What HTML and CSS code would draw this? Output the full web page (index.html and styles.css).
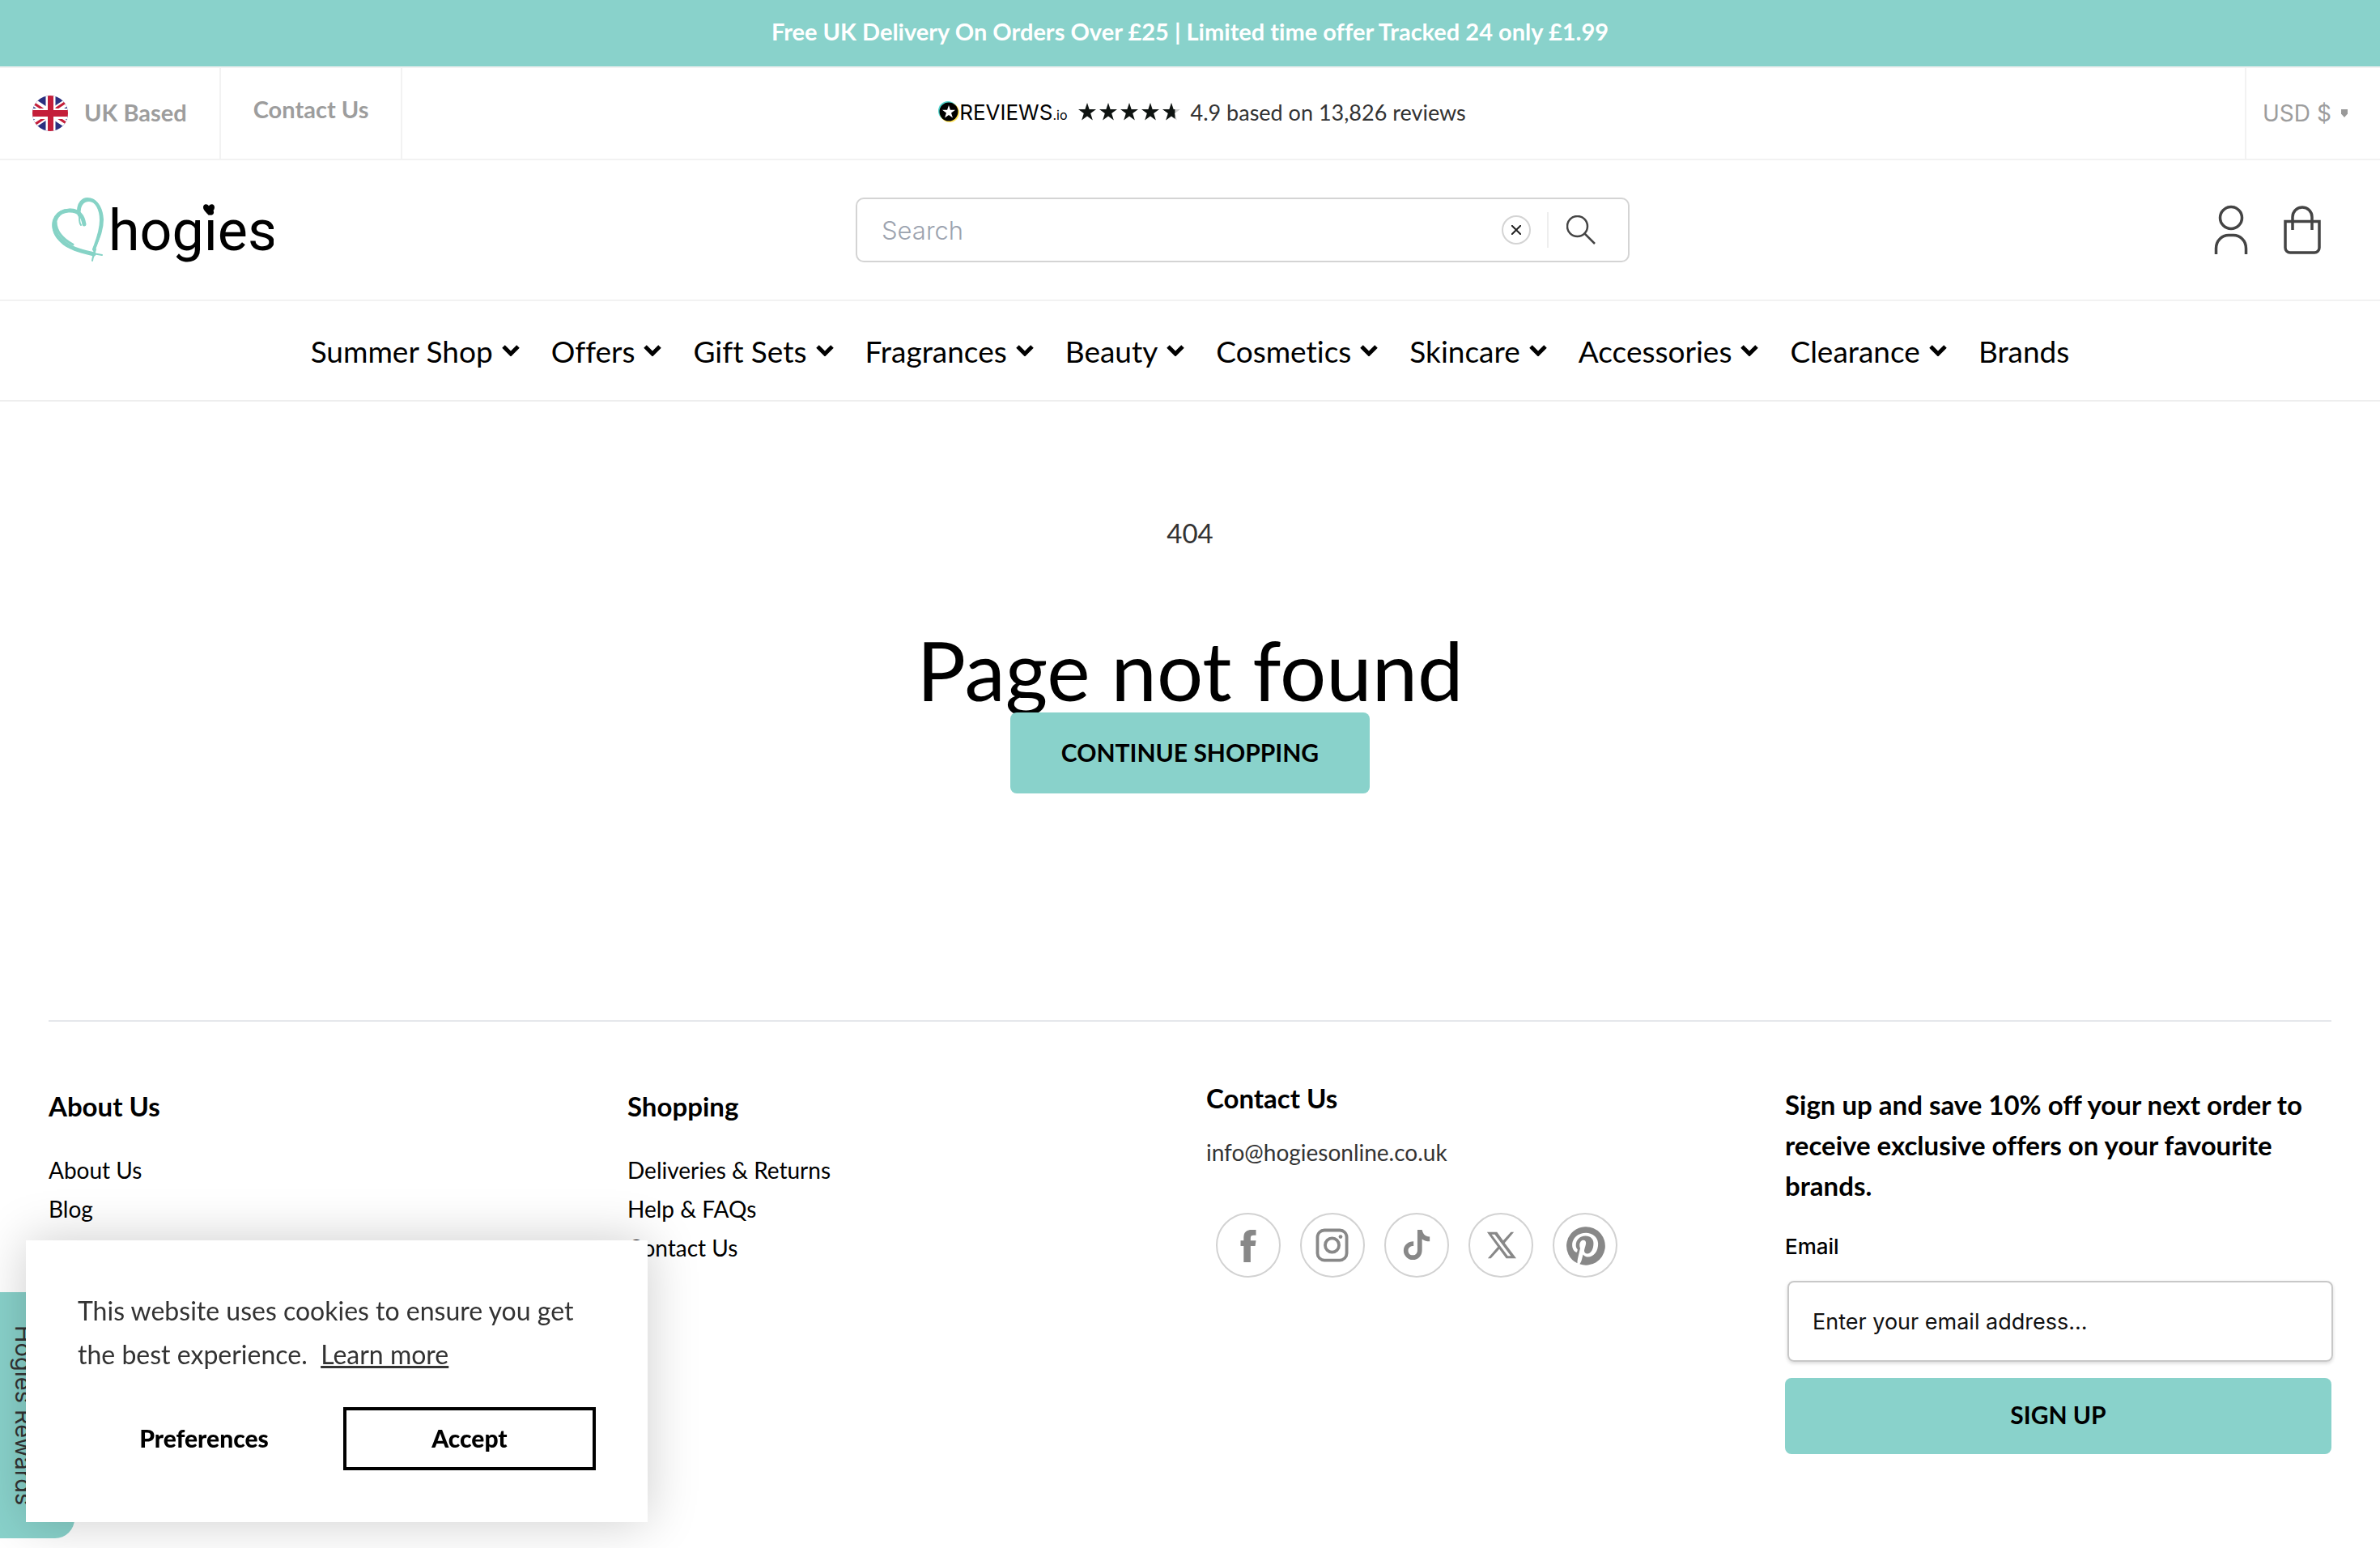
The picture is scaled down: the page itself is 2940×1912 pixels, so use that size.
FILE: index.html
```
<!DOCTYPE html>
<html lang="en">
  <head>
    <meta charset="UTF-8" />
    <meta name="viewport" content="width=device-width, initial-scale=1.0" />
    <title>404 Not Found | Hogies</title>
    <link rel="stylesheet" href="styles.css">
  </head>
  <body>
    <!-- shared shapes -->
    <svg width="0" height="0" class="sprite" aria-hidden="true">
      <symbol id="chevron" viewBox="0 0 22 14">
        <path d="M2 2l9 9 9-9" fill="none" stroke="#000" stroke-width="5" />
      </symbol>
      <symbol id="star" viewBox="0 0 20 20">
        <path d="M10 0l2.4 7.3H20l-6.2 4.5 2.4 7.7L10 15l-6.2 4.5 2.4-7.7L0 7.300h7.600z" />
      </symbol>
    </svg>

    <div class="announcement">Free UK Delivery On Orders Over £25 | Limited time offer Tracked 24 only £1.99</div>

    <div class="topbar">
      <div class="topbar-left">
        <div class="uk-based">
          <svg class="flag" viewBox="0 0 44 44" aria-hidden="true">
            <clipPath id="round"><circle cx="22" cy="22" r="22" /></clipPath>
            <g clip-path="url(#round)">
              <path fill="#2b3080" d="M0 0h44v44H0z" />
              <path stroke="#fff" stroke-width="9" d="M-8 2l60 40M-8 42l60-40" />
              <path stroke="#c41e3a" stroke-width="3" d="M-8 3l30 20M52 1L22 21M-8 43l30-20M52 41L22 21" />
              <path fill="#fff" d="M16.500 0h12v44h-12zM0 16h44v13H0z" />
              <path fill="#c41e3a" d="M19 0h7v44h-7zM0 18h44v8H0z" />
            </g>
          </svg>
          <span>UK Based</span>
        </div>
        <a href="#" class="topbar-contact">Contact Us</a>
      </div>
      <a href="#" class="reviews">
        <svg class="reviews-badge" viewBox="0 0 26 26" aria-hidden="true">
          <circle cx="12" cy="12" r="12" fill="#52d5cd" />
          <circle cx="14" cy="14" r="12" fill="#ffe152" />
          <circle cx="13" cy="13" r="11.500" fill="#000" />
          <use href="#star" x="5" y="5" width="16" height="16" fill="#fff" />
        </svg>
        <span class="reviews-brand">REVIEWS<small>.io</small></span>
        <span class="stars">
          <svg viewBox="0 0 20 20"><use href="#star" /></svg>
          <svg viewBox="0 0 20 20"><use href="#star" /></svg>
          <svg viewBox="0 0 20 20"><use href="#star" /></svg>
          <svg viewBox="0 0 20 20"><use href="#star" /></svg>
          <svg viewBox="0 0 20 20">
            <clipPath id="part"><path d="M0 0h14v20H0z" /></clipPath>
            <use href="#star" fill="#ccc" />
            <use href="#star" clip-path="url(#part)" />
          </svg>
        </span>
        <span class="reviews-text">4.9 based on 13,826 reviews</span>
      </a>
      <div class="currency">
        <select aria-label="Currency">
          <option>USD $</option>
          <option>GBP £</option>
          <option>EUR €</option>
        </select>
        <svg viewBox="0 0 8 10" aria-hidden="true"><path fill="#999" d="M0 0h8v5.500L4 10 0 5.500z" /></svg>
      </div>
    </div>

    <header class="header">
      <a href="#" class="logo" aria-label="hogies">
        <svg viewBox="0 0 274 80">
          <g fill="none" stroke="#86d3c6" stroke-linecap="round">
            <path stroke-width="5" d="M40 33c-1-6-3-10-5-12-6-7-23-7-29 3-6 10-3 21 6 29 10 10 24 13 40 17" />
            <path stroke-width="2" d="M33 18C24 12 7 14 2 28c-3 12 4 24 16 32 9 5 20 7 33 9l11 2" />
            <path stroke-width="3" d="M5 30c0 12 9 22 21 28" />
            <path stroke-width="4" d="M34 22c-2-12 4-19 12-19 9 0 15 11 15 25 0 14-5 25-9 36" />
            <path stroke-width="2" d="M32 17c0-11 6-16 12-16 10 0 18 10 19 26 0 15-6 26-10 36l-3 15M34 24c0 5 0 8 2 10M54 64l-3 10" />
          </g>
          <text x="70" y="65" class="logo-text">hogies</text>
          <path d="M194 22c-5-5-7-7-7-10 0-4.500 5-5 7-1.500 2-3.500 7-3 7 1.500 0 3-2 5-7 10z" />
        </svg>
      </a>
      <form class="search">
        <input type="search" placeholder="Search" aria-label="Search" />
        <button type="reset" class="search-clear" aria-label="Clear">
          <svg viewBox="0 0 12 12"><path d="M0 0l12 12M12 0L0 12" stroke="#222" stroke-width="2" /></svg>
        </button>
        <button type="submit" class="search-go" aria-label="Search">
          <svg viewBox="0 0 36 36" fill="none" stroke="#444" stroke-width="2.500"><circle cx="13.500" cy="13.500" r="12.500" /><path d="M22.500 22.500L35 35" /></svg>
        </button>
      </form>
      <div class="header-icons">
        <a href="#" aria-label="Account">
          <svg viewBox="0 0 48 64" fill="none" stroke="#444" stroke-width="3.500">
            <circle cx="24" cy="17" r="13.500" />
            <path d="M5.500 62V55C5.500 45 13 38.500 21 38.500h6c8 0 15.500 6.500 15.500 16.500v7" />
          </svg>
        </a>
        <a href="#" aria-label="Cart">
          <svg viewBox="0 0 48 64" fill="none" stroke="#444" stroke-width="3.500">
            <path d="M3 21.500h42V54a6 6 0 0 1-6 6H9a6 6 0 0 1-6-6z" />
            <path d="M12 32V16a12 12 0 0 1 24 0v16" />
          </svg>
        </a>
      </div>
    </header>

    <nav class="nav">
      <a href="#">Summer Shop <svg><use href="#chevron" /></svg></a>
      <a href="#">Offers <svg><use href="#chevron" /></svg></a>
      <a href="#">Gift Sets <svg><use href="#chevron" /></svg></a>
      <a href="#">Fragrances <svg><use href="#chevron" /></svg></a>
      <a href="#">Beauty <svg><use href="#chevron" /></svg></a>
      <a href="#">Cosmetics <svg><use href="#chevron" /></svg></a>
      <a href="#">Skincare <svg><use href="#chevron" /></svg></a>
      <a href="#">Accessories <svg><use href="#chevron" /></svg></a>
      <a href="#">Clearance <svg><use href="#chevron" /></svg></a>
      <a href="#">Brands</a>
    </nav>

    <main class="not-found">
      <p>404</p>
      <h1>Page not found</h1>
      <a href="#" class="btn continue">CONTINUE SHOPPING</a>
    </main>

    <footer class="footer">
      <div class="footer-col">
        <h2>About Us</h2>
        <ul>
          <li><a href="#">About Us</a></li>
          <li><a href="#">Blog</a></li>
        </ul>
      </div>
      <div class="footer-col">
        <h2>Shopping</h2>
        <ul>
          <li><a href="#">Deliveries &amp; Returns</a></li>
          <li><a href="#">Help &amp; FAQs</a></li>
          <li><a href="#">Contact Us</a></li>
        </ul>
      </div>
      <div class="footer-contact">
        <h2>Contact Us</h2>
        <p>info@hogiesonline.co.uk</p>
        <div class="social">
          <a href="#" aria-label="Facebook">
            <svg viewBox="0 0 80 80"><path d="M34 62V41h-4v-7h4v-4c0-7 4-10 10-10h6v7h-3c-3 0-4 1-4 4v3h7l-1 7h-6v21z" /></svg>
          </a>
          <a href="#" aria-label="Instagram">
            <svg viewBox="0 0 80 80">
              <g fill="none" stroke="#888" stroke-width="4"><rect x="20.500" y="20.500" width="38" height="39" rx="9" /><circle cx="39.500" cy="40" r="9" /></g>
              <circle cx="50.500" cy="29" r="2.500" />
            </svg>
          </a>
          <a href="#" aria-label="TikTok">
            <svg viewBox="0 0 80 80"><path d="M41 20h6c1 5 4 9 10 9v6c-4 0-7-1-10-3v14c0 8-5 13-12 13S23 53 23 47c0-7 6-12 13-12v6c-4 0-7 2-7 6 0 3 2 6 6 6s6-3 6-7z" /></svg>
          </a>
          <a href="#" aria-label="X">
            <svg viewBox="0 0 80 80"><path fill-rule="evenodd" d="M22 23h13l8 11 10-11h4L45 37l15 20H47l-9-12-11 12h-4l13-15zm6 3l21 28h4L32 26z" /></svg>
          </a>
          <a href="#" aria-label="Pinterest">
            <svg viewBox="1 0 80 80">
              <path d="M41 16a25 25 0 0 0-10 47.500c0-2 0-4 .5-6l3.200-13.500s-.8-1.600-.8-4c0-3.800 2.200-6.600 4.900-6.600 2.300 0 3.400 1.700 3.400 3.800 0 2.300-1.500 5.800-2.200 9-.6 2.700 1.300 4.900 4 4.900 4.800 0 8-6.100 8-13.400 0-5.500-3.700-9.700-10.500-9.700-7.600 0-12.400 5.700-12.400 12 0 2.200.6 3.700 1.700 4.900.5.600.5.800.4 1.500l-.5 2c-.2.700-.7 1-1.300.7-3.500-1.400-5.100-5.300-5.100-9.600 0-7.100 6-15.600 17.900-15.600 9.500 0 15.800 6.900 15.800 14.300 0 9.800-5.400 17.100-13.500 17.100-2.700 0-5.200-1.500-6.100-3.100l-1.800 6.900c-.6 2-1.600 4-2.600 5.500A25 25 0 1 0 41 16z" />
            </svg>
          </a>
        </div>
      </div>
      <form class="signup">
        <h2>Sign up and save 10% off your next order to receive exclusive offers on your favourite brands.</h2>
        <label for="email">Email</label>
        <input type="email" id="email" placeholder="Enter your email address..." />
        <button type="submit" class="btn">SIGN UP</button>
      </form>
    </footer>

    <button type="button" class="rewards">Hogies Rewards</button>

    <div class="cookie">
      <p>This website uses cookies to ensure you get the best experience.&nbsp; <a href="#">Learn more</a></p>
      <div class="cookie-buttons">
        <button type="button">Preferences</button>
        <button type="button" class="accept">Accept</button>
      </div>
    </div>
  </body>
</html>
```
FILE: styles.css
```
* {
  box-sizing: border-box;
}
body {
  margin: 0;
  font-family: Lato, sans-serif;
  font-size: 28px;
  font-variant-ligatures: none;
  color: #333;
  background: #fff;
}
a {
  color: inherit;
  text-decoration: none;
}
h1, h2, p, ul {
  margin: 0;
  padding: 0;
}
ul {
  list-style: none;
}
svg {
  display: block;
}
button, input, select {
  font-family: inherit;
  border: none;
  background: none;
  padding: 0;
  margin: 0;
}
.sprite {
  position: absolute;
}
.announcement {
  background: #89d2cb;
  color: #fff;
  font-size: 29px;
  font-weight: bold;
  text-align: center;
  line-height: 78px;
  padding-bottom: 4px;
}

/* top bar */
.topbar {
  display: grid;
  grid-template-columns: 1fr auto 1fr;
  height: 116px;
  border-top: 2px solid #f2f2f2;
  border-bottom: 2px solid #f2f2f2;
}
.topbar-left {
  display: flex;
  color: #9d9d9d;
  font-size: 29px;
  font-weight: bold;
}
.uk-based {
  display: flex;
  align-items: center;
  gap: 20px;
  padding: 0 40px;
  border-right: 2px solid #f2f2f2;
}
.uk-based span {
  padding-bottom: 4px;
}
.flag {
  width: 44px;
  height: 44px;
}
.topbar-contact {
  display: flex;
  align-items: center;
  padding: 0 40px 12px;
  border-right: 2px solid #f2f2f2;
}
.reviews {
  display: flex;
  align-items: center;
  padding: 0 0 4px 30px;
}
.reviews-badge {
  width: 26px;
  height: 26px;
}
.reviews-brand {
  font-family: Inter, sans-serif;
  font-size: 26px;
  color: #000;
  margin-right: 14px;
}
.reviews-brand small {
  font-size: 16px;
}
.reviews-text {
  font-size: 27px;
}
.stars {
  display: flex;
  gap: 4px;
  margin-right: 12px;
}
.stars svg {
  width: 22px;
  height: 22px;
  fill: #0e1311;
}
.currency {
  justify-self: end;
  display: flex;
  align-items: center;
  gap: 12px;
  padding: 0 40px 0 20px;
  border-left: 2px solid #f2f2f2;
}
.currency select {
  appearance: none;
  font-family: Inter, sans-serif;
  font-size: 28px;
  color: #9d9d9d;
}
.currency svg {
  width: 8px;
  height: 10px;
}

/* header */
.header {
  display: flex;
  justify-content: space-between;
  align-items: center;
  height: 174px;
  padding: 0 72px 0 64px;
  border-bottom: 2px solid #f2f2f2;
}
.logo svg {
  width: 274px;
  height: 80px;
}
.logo-text {
  font-family: Roboto, sans-serif;
  font-size: 70px;
  fill: #000;
}
.search {
  display: flex;
  align-items: center;
  width: 956px;
  height: 80px;
  padding: 0 40px 0 30px;
  border: 2px solid #d4d4d4;
  border-radius: 10px;
}
.search input {
  flex: 1;
  font-family: Inter, sans-serif;
  font-size: 31px;
  font-weight: 300;
  outline: none;
}
.search input::placeholder {
  color: #9ca3af;
}
.search-clear {
  display: flex;
  align-items: center;
  justify-content: center;
  width: 36px;
  height: 36px;
  border: 2px solid #d4d4d4;
  border-radius: 50%;
  margin-right: 20px;
}
.search-clear svg {
  width: 12px;
  height: 12px;
}
.search-go {
  height: 44px;
  padding-left: 22px;
  border-left: 2px solid #eee;
}
.search-go svg {
  width: 36px;
  height: 36px;
}
.header-icons {
  display: flex;
  gap: 40px;
}
.header-icons svg {
  width: 48px;
  height: 64px;
}

/* nav */
.nav {
  display: flex;
  justify-content: center;
  gap: 39px;
  height: 124px;
  border-bottom: 2px solid #eee;
  font-size: 37px;
  color: #000;
}
.nav a {
  display: flex;
  align-items: center;
  gap: 11px;
}
.nav svg {
  width: 22px;
  height: 14px;
}

/* 404 */
.not-found {
  padding: 133px 60px 280px;
  text-align: center;
}
.not-found p {
  font-size: 33px;
  line-height: 58px;
  margin-bottom: 88px;
}
.not-found h1 {
  font-size: 101px;
  font-weight: normal;
  line-height: 105px;
  color: #000;
}
.btn {
  background: #89d2cb;
  color: #000;
  font-size: 30px;
  font-weight: bold;
  border-radius: 8px;
}
.continue {
  display: block;
  width: fit-content;
  margin: 0 auto;
  padding: 0 63px 2px;
  line-height: 98px;
  position: relative;
}

/* footer */
.footer {
  display: grid;
  grid-template-columns: repeat(4, 1fr);
  gap: 40px;
  margin: 0 60px;
  padding: 69px 0 112px;
  border-top: 2px solid #e5e7eb;
  color: #000;
}
.footer h2 {
  font-size: 33px;
  line-height: 50px;
}
.footer-col {
  padding-top: 10px;
}
.footer-col h2 {
  margin-bottom: 30px;
}
.footer-col li {
  line-height: 48px;
}
.footer-contact p {
  color: #333;
  line-height: 48px;
  margin: 18px 0 51px;
}
.social {
  display: flex;
  gap: 24px;
  padding-left: 12px;
}
.social a {
  width: 80px;
  height: 80px;
  border: 2px solid #d2d2d2;
  border-radius: 50%;
}
.social svg {
  width: 76px;
  height: 76px;
  fill: #888;
}
.signup {
  display: flex;
  flex-direction: column;
  padding-top: 8px;
}
.signup label {
  font-family: Inter, sans-serif;
  font-size: 26px;
  font-weight: 500;
  line-height: 48px;
  margin: 27px 0 18px;
}
.signup input {
  height: 100px;
  margin: 0 -2px 20px 3px;
  padding: 0 29px;
  font-family: Inter, sans-serif;
  font-size: 27px;
  border: 2px solid #c8c8c8;
  border-radius: 8px;
  box-shadow: 0 2px 4px rgba(0, 0, 0, 0.15);
}
.signup input::placeholder {
  color: #111;
}
.signup .btn {
  height: 94px;
  padding-bottom: 4px;
}

/* rewards tab, sits under the cookie box */
.rewards {
  position: fixed;
  left: 0;
  bottom: 12px;
  width: 92px;
  height: 304px;
  padding-right: 34px;
  writing-mode: vertical-rl;
  font-family: Inter, sans-serif;
  font-size: 29px;
  color: #333;
  background: #89d2cb;
  border-radius: 0 24px 24px 0;
}
.cookie {
  position: fixed;
  left: 32px;
  bottom: 32px;
  width: 768px;
  padding: 60px 64px 64px;
  background: #fff;
  box-shadow: 0 0 60px rgba(0, 0, 0, 0.2);
}
.cookie p {
  font-size: 32px;
  line-height: 54px;
  margin-bottom: 38px;
}
.cookie p a {
  text-decoration: underline;
}
.cookie-buttons {
  display: flex;
  gap: 16px;
}
.cookie button {
  flex: 1 1 50%;
  height: 78px;
  padding-bottom: 2px;
  font-size: 30px;
  font-weight: 900;
  color: #000;
}
.cookie .accept {
  border: 4px solid #000;
}
```
